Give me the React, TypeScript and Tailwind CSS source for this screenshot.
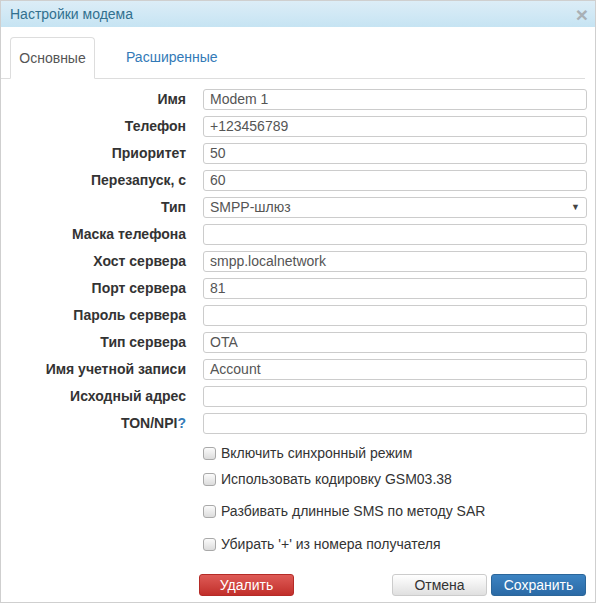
import React from "react";

const fields: { label: string; value: string; select?: boolean; help?: boolean }[] = [
  { label: "Имя", value: "Modem 1" },
  { label: "Телефон", value: "+123456789" },
  { label: "Приоритет", value: "50" },
  { label: "Перезапуск, с", value: "60" },
  { label: "Тип", value: "SMPP-шлюз", select: true },
  { label: "Маска телефона", value: "" },
  { label: "Хост сервера", value: "smpp.localnetwork" },
  { label: "Порт сервера", value: "81" },
  { label: "Пароль сервера", value: "" },
  { label: "Тип сервера", value: "OTA" },
  { label: "Имя учетной записи", value: "Account" },
  { label: "Исходный адрес", value: "" },
  { label: "TON/NPI", value: "", help: true },
];

const checks: { text: string; mt: string }[] = [
  { text: "Включить синхронный режим", mt: "mt-[9px]" },
  { text: "Использовать кодировку GSM03.38", mt: "mt-[6px]" },
  { text: "Разбивать длинные SMS по методу SAR", mt: "mt-[12px]" },
  { text: "Убирать '+' из номера получателя", mt: "mt-[13px]" },
];

function Checkbox() {
  return (
    <span className="inline-block w-[13px] h-[13px] rounded-[3px] border border-[#a9a9a9] bg-gradient-to-b from-[#fbfbfb] to-[#dcdcdc] shrink-0" />
  );
}

export default function App() {
  return (
    <div
      className="w-[596px] h-[603px] border border-[#cfcfcf] bg-white flex flex-col text-[14px]"
      style={{ fontFamily: '"Liberation Sans", Arial, sans-serif' }}
    >
      <div className="h-[26px] shrink-0 flex items-center justify-between pl-[9px] pr-[7px] bg-gradient-to-b from-[#dcedf7] to-[#c6e4f3] text-[#31708f]">
        <span className="text-[14px]">Настройки модема</span>
        <span className="text-[#a9b0b5] font-bold text-[21px] leading-none">×</span>
      </div>
      <div className="pr-[10px] pt-[10px]">
        <div className="flex items-end border-b border-[#ddd] h-[42px]">
          <div className="ml-[9px] h-[42px] w-[85px] border border-[#ddd] border-b-white rounded-t-[4px] bg-white flex items-center justify-center text-[#555] -mb-px">
            Основные
          </div>
          <div className="h-[41px] flex items-center ml-[31px] text-[#337ab7]">Расширенные</div>
        </div>
      </div>
      <div className="flex flex-col gap-[6px] pt-[10px]">
        {fields.map((f) => (
          <div key={f.label} className="flex items-center h-[21px]">
            <div className="w-[185px] text-right font-bold text-[#333]">
              {f.label}
              {f.help && <span className="text-[#337ab7]">?</span>}
            </div>
            <div className="ml-[17px] w-[384px] h-[21px] border border-[#ccc] rounded-[3px] flex items-center justify-between pl-[6px] pr-[6px] text-[#555] bg-white">
              <span>{f.value}</span>
              {f.select && <span className="text-[9px] text-[#444]">▼</span>}
            </div>
          </div>
        ))}
      </div>
      <div className="flex flex-col pl-[202px]">
        {checks.map((c) => (
          <div key={c.text} className={`flex items-center gap-[5px] h-[20px] text-[#333] ${c.mt}`}>
            <Checkbox />
            <span>{c.text}</span>
          </div>
        ))}
      </div>
      <div className="flex items-center pl-[198px] pr-[9px] mt-[20px]">
        <button className="w-[95px] h-[22px] rounded-[3px] border border-[#b52b27] bg-gradient-to-b from-[#de5a56] to-[#c12e2a] text-white text-[14px]">
          Удалить
        </button>
        <div className="flex-1" />
        <button className="w-[95px] h-[22px] rounded-[3px] border border-[#ccc] bg-gradient-to-b from-[#ffffff] to-[#e0e0e0] text-[#333] text-[14px]">
          Отмена
        </button>
        <button className="ml-[4px] w-[95px] h-[22px] rounded-[3px] border border-[#2b669a] bg-gradient-to-b from-[#3c83c2] to-[#2a6aa6] text-white text-[14px]">
          Сохранить
        </button>
      </div>
    </div>
  );
}
